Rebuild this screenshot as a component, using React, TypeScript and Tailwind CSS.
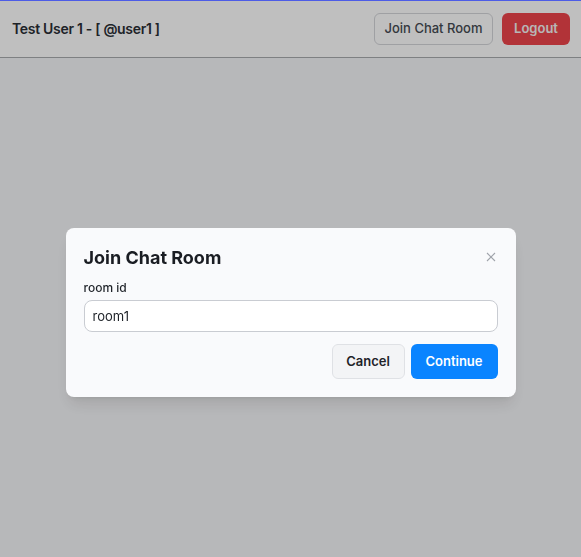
import * as React from 'react';

const font = { fontFamily: 'Inter, "Noto Sans", sans-serif' };

const JoinRoomModal: React.FC<{ roomId: string; setRoomId: (v: string) => void }> = ({ roomId, setRoomId }) => {
    return (
        <div className="fixed inset-0 z-10 flex items-start justify-center bg-black/25 pt-[228px]">
            <div className="w-[450px] rounded-lg bg-[#f9fafc] px-[18px] pt-[16px] pb-[18px] shadow-lg">
                <div className="flex items-center justify-between">
                    <h2 className="text-[18px] leading-[28px] font-bold text-[#1a1d23]">Join Chat Room</h2>
                    <button className="mr-[2px] -mt-[2px] text-[#a0a4ab]">
                        <svg width="10" height="10" viewBox="0 0 10 10" stroke="currentColor" strokeWidth="1.1">
                            <path d="M1 1 L9 9 M9 1 L1 9" />
                        </svg>
                    </button>
                </div>
                <label htmlFor="roomId" className="mt-[8px] block text-[12px] leading-[16px] font-medium text-[#1f2329]">room id</label>
                <input
                    id="roomId"
                    value={roomId}
                    onChange={e => setRoomId(e.target.value)}
                    className="mt-[4px] h-[32px] w-full rounded-lg border border-[#c9ccd2] bg-white px-[8px] text-[13px] text-[#1f2329] outline-none"
                />
                <div className="mt-[12px] flex justify-end gap-[6px]">
                    <button className="h-[35px] w-[73px] rounded-md border border-[#dfe1e5] bg-[#f3f4f6] text-[13px] font-semibold text-[#1f2329]">Cancel</button>
                    <button className="h-[35px] w-[87px] rounded-md bg-[#0a84ff] text-[13px] font-semibold text-white">Continue</button>
                </div>
            </div>
        </div>
    );
};

const App: React.FC = () => {
    const [roomId, setRoomId] = React.useState('room1');

    return (
        <div className="min-h-screen bg-[#f5f6f8]" style={font}>
            <div className="fixed top-0 left-0 right-0 z-20 h-px bg-[#4d5ce6]"></div>
            <header className="flex h-[58px] items-center justify-between border-b border-[#a9abae] bg-white pl-[12px] pr-[11px]">
                <h1 className="text-[14px] font-semibold tracking-[-0.3px] text-[#2a2e35]">Test User 1 - [ @user1 ]</h1>
                <div className="flex items-center gap-[9px]">
                    <button className="h-[32px] w-[119px] rounded-md border border-[#d4d6da] text-[13px] font-medium text-[#464b53]">Join Chat Room</button>
                    <button className="h-[32px] w-[68px] rounded-md bg-[#ee444b] text-[13px] font-semibold text-[#f4f4f5]">Logout</button>
                </div>
            </header>
            <main></main>
            <JoinRoomModal roomId={roomId} setRoomId={setRoomId} />
        </div>
    );
};

export default App;
